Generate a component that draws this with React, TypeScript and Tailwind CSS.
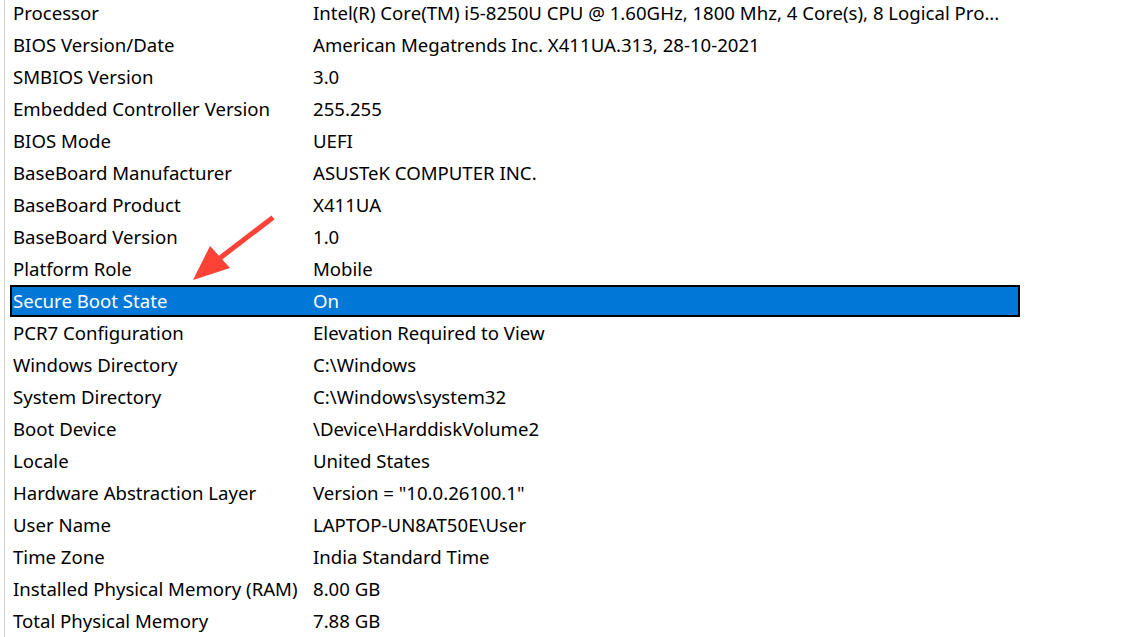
import React from 'react';

interface Row {
  label: string;
  value: string;
  selected?: boolean;
}

const ROWS: Row[] = [
  { label: 'Processor', value: 'Intel(R) Core(TM) i5-8250U CPU @ 1.60GHz, 1800 Mhz, 4 Core(s), 8 Logical Pro...' },
  { label: 'BIOS Version/Date', value: 'American Megatrends Inc. X411UA.313, 28-10-2021' },
  { label: 'SMBIOS Version', value: '3.0' },
  { label: 'Embedded Controller Version', value: '255.255' },
  { label: 'BIOS Mode', value: 'UEFI' },
  { label: 'BaseBoard Manufacturer', value: 'ASUSTeK COMPUTER INC.' },
  { label: 'BaseBoard Product', value: 'X411UA' },
  { label: 'BaseBoard Version', value: '1.0' },
  { label: 'Platform Role', value: 'Mobile' },
  { label: 'Secure Boot State', value: 'On', selected: true },
  { label: 'PCR7 Configuration', value: 'Elevation Required to View' },
  { label: 'Windows Directory', value: 'C:\\Windows' },
  { label: 'System Directory', value: 'C:\\Windows\\system32' },
  { label: 'Boot Device', value: '\\Device\\HarddiskVolume2' },
  { label: 'Locale', value: 'United States' },
  { label: 'Hardware Abstraction Layer', value: 'Version = "10.0.26100.1"' },
  { label: 'User Name', value: 'LAPTOP-UN8AT50E\\User' },
  { label: 'Time Zone', value: 'India Standard Time' },
  { label: 'Installed Physical Memory (RAM)', value: '8.00 GB' },
  { label: 'Total Physical Memory', value: '7.88 GB' },
];

export default function App() {
  return (
    <div
      className="relative w-[1132px] h-[637px] overflow-hidden bg-white text-black"
      style={{ fontFamily: '"Noto Sans", "Open Sans", sans-serif' }}
    >
      <div className="flex h-full">
        {/* left pane edge */}
        <div className="w-[5px] shrink-0 border-r border-[#d4d4d4]" />
        <div className="flex flex-col -mt-[3px] pl-[5px] w-[1015px]">
          {ROWS.map(row => (
            <div
              key={row.label}
              className={`flex items-center h-[32px] whitespace-nowrap text-[18.6px] leading-none ${
                row.selected ? 'bg-[#0078d7] text-white border-2 border-black' : 'border-2 border-transparent'
              }`}
            >
              <span className="w-[301px] pl-px shrink-0">{row.label}</span>
              <span>{row.value}</span>
            </div>
          ))}
        </div>
      </div>

      {/* annotation arrow */}
      <svg className="absolute left-0 top-0 pointer-events-none" width="1132" height="637">
        <line x1="271" y1="219" x2="220" y2="258" stroke="#ff4136" strokeWidth="5" strokeLinecap="square" />
        <polygon points="193,280 210,246 230,268" fill="#ff4136" />
      </svg>
    </div>
  );
}
